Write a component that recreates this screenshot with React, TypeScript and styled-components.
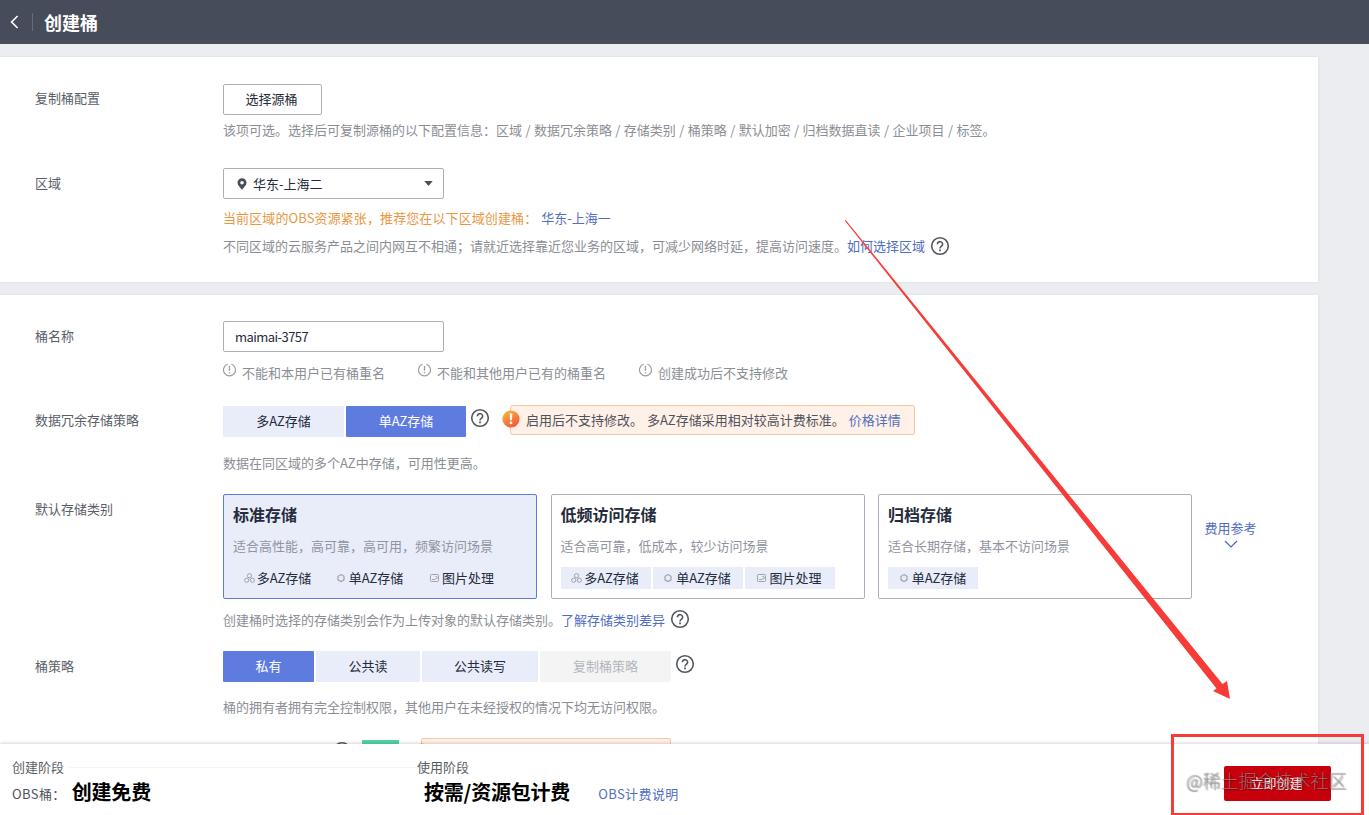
import React from "react";
import styled, { createGlobalStyle, css } from "styled-components";

const Global = createGlobalStyle`
  *, *::before, *::after { box-sizing: border-box; }
  body {
    margin: 0;
    overflow: hidden;
    font-family: "Noto Sans CJK SC", "Liberation Sans", sans-serif;
    font-size: 13px;
    font-weight: 400;
    line-height: 20px;
    color: #5a5e67;
  }
  button, input { font: inherit; color: inherit; margin: 0; }
`;

const Page = styled.div`
  position: relative;
  display: flex;
  flex-direction: column;
  width: 1369px;
  height: 815px;
  overflow: hidden;
  background: #ecedf1;
`;

const Header = styled.header`
  flex: none;
  display: flex;
  align-items: center;
  height: 44px;
  padding-left: 10px;
  background: #464c59;
  color: #fff;
`;

const Divider = styled.span`
  width: 1px;
  height: 18px;
  margin: 0 11px 0 13px;
  background: #666c79;
`;

const Title = styled.h1`
  margin: 0;
  font-size: 18px;
  line-height: 24px;
  font-weight: 700;
`;

const Main = styled.main`
  flex: 1;
  min-height: 0;
  overflow: hidden;
  padding-top: 13px;
`;

const Card = styled.section<{ $h: number; $pt: number }>`
  width: 1318px;
  height: ${(p) => p.$h}px;
  padding: ${(p) => p.$pt}px 0 0 35px;
  margin-bottom: 13px;
  background: #fff;
  box-shadow: 0 0 2px #d3d6dc;
`;

const Field = styled.div<{ $h: number }>`
  display: grid;
  grid-template-columns: 188px 1fr;
  height: ${(p) => p.$h}px;
`;

const Label = styled.label<{ $mt?: number }>`
  margin-top: ${(p) => p.$mt ?? 5}px;
`;

const Line = styled.div<{ $h: number; $mt?: number }>`
  display: flex;
  align-items: center;
  height: ${(p) => p.$h}px;
  margin-top: ${(p) => p.$mt ?? 0}px;
  white-space: nowrap;
`;

const Text = styled.span<{ $tone?: "muted" | "warn" | "dark"; $ls?: number; $ws?: number; $ml?: number }>`
  color: ${(p) => ({ muted: "#8b8e95", warn: "#e9973f", dark: "#4f535c" })[p.$tone ?? "muted"]};
  letter-spacing: ${(p) => p.$ls ?? 0}px;
  word-spacing: ${(p) => p.$ws ?? 0}px;
  margin-left: ${(p) => p.$ml ?? 0}px;
`;

const Link = styled.a<{ $ml?: number; $ls?: number }>`
  color: #526ec0;
  letter-spacing: ${(p) => p.$ls ?? 0}px;
  margin-left: ${(p) => p.$ml ?? 0}px;
`;

const box = css`
  height: 31px;
  border: 1px solid #adb0b8;
  border-radius: 2px;
  background: #fff;
  color: #252b3a;
`;

const SourceButton = styled.button`
  ${box}
  display: block;
  width: 99px;
  padding: 0 2px 2px 0;
`;

const Select = styled.div`
  ${box}
  display: flex;
  align-items: center;
  width: 221px;
  padding: 0 10px 0 13px;
  span { flex: 1; margin-left: 6px; }
`;

const Input = styled.input`
  ${box}
  display: block;
  width: 221px;
  padding: 0 11px;
  letter-spacing: -0.55px;
`;

const Hint = styled.span<{ $w: number }>`
  display: flex;
  align-items: center;
  width: ${(p) => p.$w}px;
  color: #8b8e95;
  svg { margin: -6px 6px 0 0; }
`;

const Segments = styled.div`
  display: flex;
  gap: 2px;
`;

const Segment = styled.button<{ $w: number; $state?: "active" | "disabled" }>`
  width: ${(p) => p.$w}px;
  height: 31px;
  padding: 0 0 2px;
  border: 0;
  border-radius: 1px;
  background: ${(p) => (p.$state === "active" ? "#5e7ce0" : p.$state === "disabled" ? "#f4f4f5" : "#e9edfa")};
  color: ${(p) => (p.$state === "active" ? "#fff" : p.$state === "disabled" ? "#b3b6bc" : "#252b3a")};
`;

const Notice = styled.div<{ $w: number; $ml: number; $mt?: number }>`
  position: relative;
  display: flex;
  align-items: center;
  width: ${(p) => p.$w}px;
  height: 30px;
  margin-left: ${(p) => p.$ml}px;
  margin-top: ${(p) => p.$mt ?? 0}px;
  padding-left: 18px;
  border: 1px solid #fac8a0;
  border-radius: 2px;
  background: #fff1e8;
`;

const NoticeBadge = styled.span`
  position: absolute;
  left: -9px;
  top: 4px;
  width: 18px;
  height: 18px;
  svg { display: block; }
`;

const ClassRow = styled.div`
  display: flex;
  align-items: flex-start;
  gap: 13.5px;
  height: 105px;
`;

const ClassCard = styled.div<{ $active?: boolean }>`
  width: 314px;
  height: 105px;
  padding: 8px 9px 0;
  border: 1px solid ${(p) => (p.$active ? "#5e7ce0" : "#adb0b8")};
  border-radius: 2px;
  background: ${(p) => (p.$active ? "#e9edfa" : "#fff")};
`;

const ClassName = styled.h3`
  margin: 0 0 11px;
  font-size: 16px;
  font-weight: 700;
  line-height: 22px;
  color: #252b3a;
`;

const ClassDesc = styled.p`
  margin: 0;
  color: #9194a0;
`;

const Tags = styled.div`
  display: flex;
  gap: 2px;
  margin-top: 11px;
`;

const Tag = styled.span<{ $w: number }>`
  display: flex;
  align-items: center;
  justify-content: center;
  gap: 2px;
  width: ${(p) => p.$w}px;
  height: 22px;
  padding-right: 1px;
  background: #e9edfa;
  color: #252b3a;
  white-space: nowrap;
`;

const PriceLink = styled.a`
  display: flex;
  flex-direction: column;
  align-items: center;
  margin: 24px 0 0 -1px;
  color: #526ec0;
  svg { margin-top: 2px; }
`;

const FreeBadge = styled.span`
  width: 37px;
  height: 26px;
  margin-left: 10px;
  background: #50d4ab;
`;

const Footer = styled.footer`
  position: relative;
  flex: none;
  display: flex;
  height: 71px;
  padding-left: 12px;
  background: #fff;
  box-shadow: 0 -1px 3px rgba(0, 0, 0, 0.16);
`;

const Stage = styled.div<{ $w: number }>`
  width: ${(p) => p.$w}px;
  padding-top: 13px;
`;

const StageHead = styled.div<{ $rule?: boolean }>`
  display: flex;
  align-items: center;
  gap: 5px;
  height: 20px;
  &::after {
    content: "";
    flex: 1;
    height: 1px;
    background: ${(p) => (p.$rule ? "#f6f6f8" : "transparent")};
  }
`;

const Price = styled.strong<{ $ml: number }>`
  margin-left: ${(p) => p.$ml}px;
  padding-bottom: 4px;
  font-size: 20px;
  line-height: 28px;
  font-weight: 700;
  letter-spacing: -0.2px;
  color: #000;
`;

const CreateButton = styled.button`
  width: 107px;
  height: 35px;
  margin: 22px 38px 0 auto;
  padding: 0 2px 1px 0;
  border: 0;
  border-radius: 2px;
  background: #c7000b;
  color: #fff;
`;

const Overlay = styled.svg`
  position: absolute;
  left: 0;
  top: 0;
  pointer-events: none;
`;

const Watermark = styled.span`
  position: absolute;
  left: 1186px;
  top: 766px;
  font-size: 18px;
  line-height: 28px;
  font-weight: 300;
  color: rgba(255, 255, 255, 0.42);
  text-shadow: 0 0 1px rgba(0, 0, 0, 0.5), 1px 1px 1px rgba(0, 0, 0, 0.35);
  white-space: nowrap;
  pointer-events: none;
`;

const HelpSvg = styled.svg<{ $ml: number; $mt?: number }>`
  flex: none;
  margin-left: ${(p) => p.$ml}px;
  margin-top: ${(p) => p.$mt ?? 0}px;
`;

const Help = ({ ml, mt }: { ml: number; mt?: number }) => (
  <HelpSvg $ml={ml} $mt={mt} width="20" height="20" viewBox="0 0 20 20" fill="none" stroke="#54575e" strokeWidth="1.6">
    <circle cx="10" cy="10" r="8.3" />
    <path d="M7.4 8.2a2.6 2.5 0 1 1 4.2 1.9c-1 .7-1.6 1.1-1.6 2.3" />
    <path d="M10 13.6v1.7" strokeWidth="1.8" />
  </HelpSvg>
);

const HintMark = () => (
  <svg width="13" height="14" viewBox="0 0 13 14" fill="none" stroke="#9a9da4" strokeWidth="1.2">
    <path d="M4.600 1.200a6 6 0 1 0 3.800 0" />
    <path d="M6.500 3v4.800M6.500 9v1.300" strokeWidth="1.300" />
  </svg>
);

const Badge = () => (
  <NoticeBadge>
    <svg width="18" height="18" viewBox="0 0 18 18">
      <defs>
        <linearGradient id="warn" x1="0" y1="0" x2="0.6" y2="1">
          <stop offset="0" stopColor="#f8bf36" />
          <stop offset="1" stopColor="#f4593f" />
        </linearGradient>
      </defs>
      <circle cx="9" cy="9" r="8.6" fill="url(#warn)" />
      <path d="M7.6 3.5h2.8l-.5 6.8H8.1z" fill="#fff" />
      <circle cx="9" cy="12.9" r="1.4" fill="#fff" />
    </svg>
  </NoticeBadge>
);

type TagKind = "multi" | "single" | "image";

const TagIcon = ({ kind }: { kind: TagKind }) => (
  <svg width="11" height="10" viewBox="0 0 11 10" fill="none" stroke="#a0a3ac">
    {kind === "multi" && (
      <>
        <circle cx="5.5" cy="2.7" r="2.1" />
        <circle cx="2.7" cy="7.2" r="2.1" />
        <circle cx="8.3" cy="7.2" r="2.1" />
      </>
    )}
    {kind === "single" && <path d="M5 1.600l3 1.700v3.500L5 8.500 2 6.800V3.300z" strokeWidth="1.200" />}
    {kind === "image" && (
      <>
        <rect x="1.500" y="1.500" width="8" height="7" rx="0.800" />
        <path d="M3 6.500h2.500L9 4.500M6.500 3.500h1.500" />
      </>
    )}
  </svg>
);

const tagText: Record<TagKind, string> = { multi: "多AZ存储", single: "单AZ存储", image: "图片处理" };

const classes: { name: string; desc: string; tags: TagKind[]; active?: boolean }[] = [
  { name: "标准存储", desc: "适合高性能，高可靠，高可用，频繁访问场景", tags: ["multi", "single", "image"], active: true },
  { name: "低频访问存储", desc: "适合高可靠，低成本，较少访问场景", tags: ["multi", "single", "image"] },
  { name: "归档存储", desc: "适合长期存储，基本不访问场景", tags: ["single"] },
];

export default function App() {
  return (
    <Page>
      <Global />
      <Header>
        <svg width="9" height="14" viewBox="0 0 9 14" fill="none" stroke="#fff" strokeWidth="1.6">
          <path d="M7.6 1L1.6 7l6 6" />
        </svg>
        <Divider />
        <Title>创建桶</Title>
      </Header>
      <Main>
        <Card $h={225} $pt={27}>
          <Field $h={84}>
            <Label $mt={4}>复制桶配置</Label>
            <div>
              <SourceButton>选择源桶</SourceButton>
              <Line $h={20} $mt={5}>
                <Text $ws={0.5}>该项可选。选择后可复制源桶的以下配置信息：区域 / 数据冗余策略 / 存储类别 / 桶策略 / 默认加密 / 归档数据直读 / 企业项目 / 标签。</Text>
              </Line>
            </div>
          </Field>
          <Field $h={90}>
            <Label>区域</Label>
            <div>
              <Select>
                <svg width="10" height="12" viewBox="0 0 10 12">
                  <path fillRule="evenodd" fill="#4a4d54" d="M5 .3a4.500 4.500 0 0 1 4.500 4.500C9.500 7.600 6.800 9.300 5 11.800 3.200 9.300.5 7.600.5 4.800A4.500 4.500 0 0 1 5 .3zM5 3a1.800 1.800 0 1 0 0 3.600A1.800 1.800 0 0 0 5 3z" />
                </svg>
                <span>华东-上海二</span>
                <svg width="9" height="5" viewBox="0 0 9 5">
                  <path d="M.3 0h8.400L4.500 5z" fill="#4a4d54" />
                </svg>
              </Select>
              <Line $h={20} $mt={9}>
                <Text $tone="warn" $ls={0.1}>当前区域的OBS资源紧张，推荐您在以下区域创建桶：</Text>
                <Link $ml={4}>华东-上海一</Link>
              </Line>
              <Line $h={20} $mt={8}>
                <Text>不同区域的云服务产品之间内网互不相通；请就近选择靠近您业务的区域，可减少网络时延，提高访问速度。</Text>
                <Link>如何选择区域</Link>
                <Help ml={5} />
              </Line>
            </div>
          </Field>
        </Card>

        <Card $h={700} $pt={26}>
          <Field $h={85}>
            <Label>桶名称</Label>
            <div>
              <Input defaultValue="maimai-3757" />
              <Line $h={20} $mt={11}>
                <Hint $w={195}><HintMark />不能和本用户已有桶重名</Hint>
                <Hint $w={221}><HintMark />不能和其他用户已有的桶重名</Hint>
                <Hint $w={180}><HintMark />创建成功后不支持修改</Hint>
              </Line>
            </div>
          </Field>
          <Field $h={88}>
            <Label $mt={4}>数据冗余存储策略</Label>
            <div>
              <Line $h={31}>
                <Segments>
                  <Segment $w={121}>多AZ存储</Segment>
                  <Segment $w={120} $state="active">单AZ存储</Segment>
                </Segments>
                <Help ml={4} mt={-7} />
                <Notice $w={405} $ml={20} $mt={-3}>
                  <Badge />
                  <Text $tone="dark" $ml={-3}>启用后不支持修改。</Text>
                  <Text $tone="dark" $ml={4}>多AZ存储采用相对较高计费标准。</Text>
                  <Link $ml={4}>价格详情</Link>
                </Notice>
              </Line>
              <Line $h={20} $mt={16}>
                <Text>数据在同区域的多个AZ中存储，可用性更高。</Text>
              </Line>
            </div>
          </Field>
          <Field $h={157}>
            <Label>默认存储类别</Label>
            <div>
              <ClassRow>
                {classes.map((c) => (
                  <ClassCard key={c.name} $active={c.active}>
                    <ClassName>{c.name}</ClassName>
                    <ClassDesc>{c.desc}</ClassDesc>
                    <Tags>
                      {c.tags.map((t) => (
                        <Tag key={t} $w={90}>
                          <TagIcon kind={t} />
                          {tagText[t]}
                        </Tag>
                      ))}
                    </Tags>
                  </ClassCard>
                ))}
                <PriceLink>
                  费用参考
                  <svg width="14" height="8" viewBox="0 0 14 8" fill="none" stroke="#4a67bd" strokeWidth="1.2">
                    <path d="M1 1l6 6 6-6" />
                  </svg>
                </PriceLink>
              </ClassRow>
              <Line $h={20} $mt={11}>
                <Text>创建桶时选择的存储类别会作为上传对象的默认存储类别。</Text>
                <Link>了解存储类别差异</Link>
                <Help ml={5} mt={-2} />
              </Line>
            </div>
          </Field>
          <Field $h={87}>
            <Label>桶策略</Label>
            <div>
              <Line $h={31}>
                <Segments>
                  <Segment $w={91} $state="active">私有</Segment>
                  <Segment $w={104}>公共读</Segment>
                  <Segment $w={116}>公共读写</Segment>
                  <Segment $w={131} $state="disabled">复制桶策略</Segment>
                </Segments>
                <Help ml={4} mt={-5} />
              </Line>
              <Line $h={20} $mt={15}>
                <Text>桶的拥有者拥有完全控制权限，其他用户在未经授权的情况下均无访问权限。</Text>
              </Line>
            </div>
          </Field>
          <Field $h={40}>
            <Label />
            <Line $h={30}>
              <Help ml={109} mt={-5} />
              <FreeBadge />
              <Notice $w={250} $ml={22}><Badge /></Notice>
            </Line>
          </Field>
        </Card>
      </Main>
      <Footer>
        <Stage $w={405}>
          <StageHead $rule>创建阶段</StageHead>
          <Line $h={28} $mt={3}>
            <Text $tone="dark" $ls={0.4}>OBS桶：</Text>
            <Price $ml={6}>创建免费</Price>
          </Line>
        </Stage>
        <Stage $w={300}>
          <StageHead>使用阶段</StageHead>
          <Line $h={28} $mt={3}>
            <Price $ml={7}>按需/资源包计费</Price>
            <Link $ml={28} $ls={0.4}>OBS计费说明</Link>
          </Line>
        </Stage>
        <CreateButton>立即创建</CreateButton>
      </Footer>
      <Overlay width="1369" height="815" viewBox="0 0 1369 815">
        <polygon points="844.700,220.500 845.700,220 1222.500,684 1227,681 1230,699 1213,691 1216.500,688.500" fill="#f73b38" />
        <rect x="1172.500" y="735.500" width="190" height="79" fill="none" stroke="#f73b38" strokeWidth="3" />
      </Overlay>
      <Watermark>@稀土掘金技术社区</Watermark>
    </Page>
  );
}
